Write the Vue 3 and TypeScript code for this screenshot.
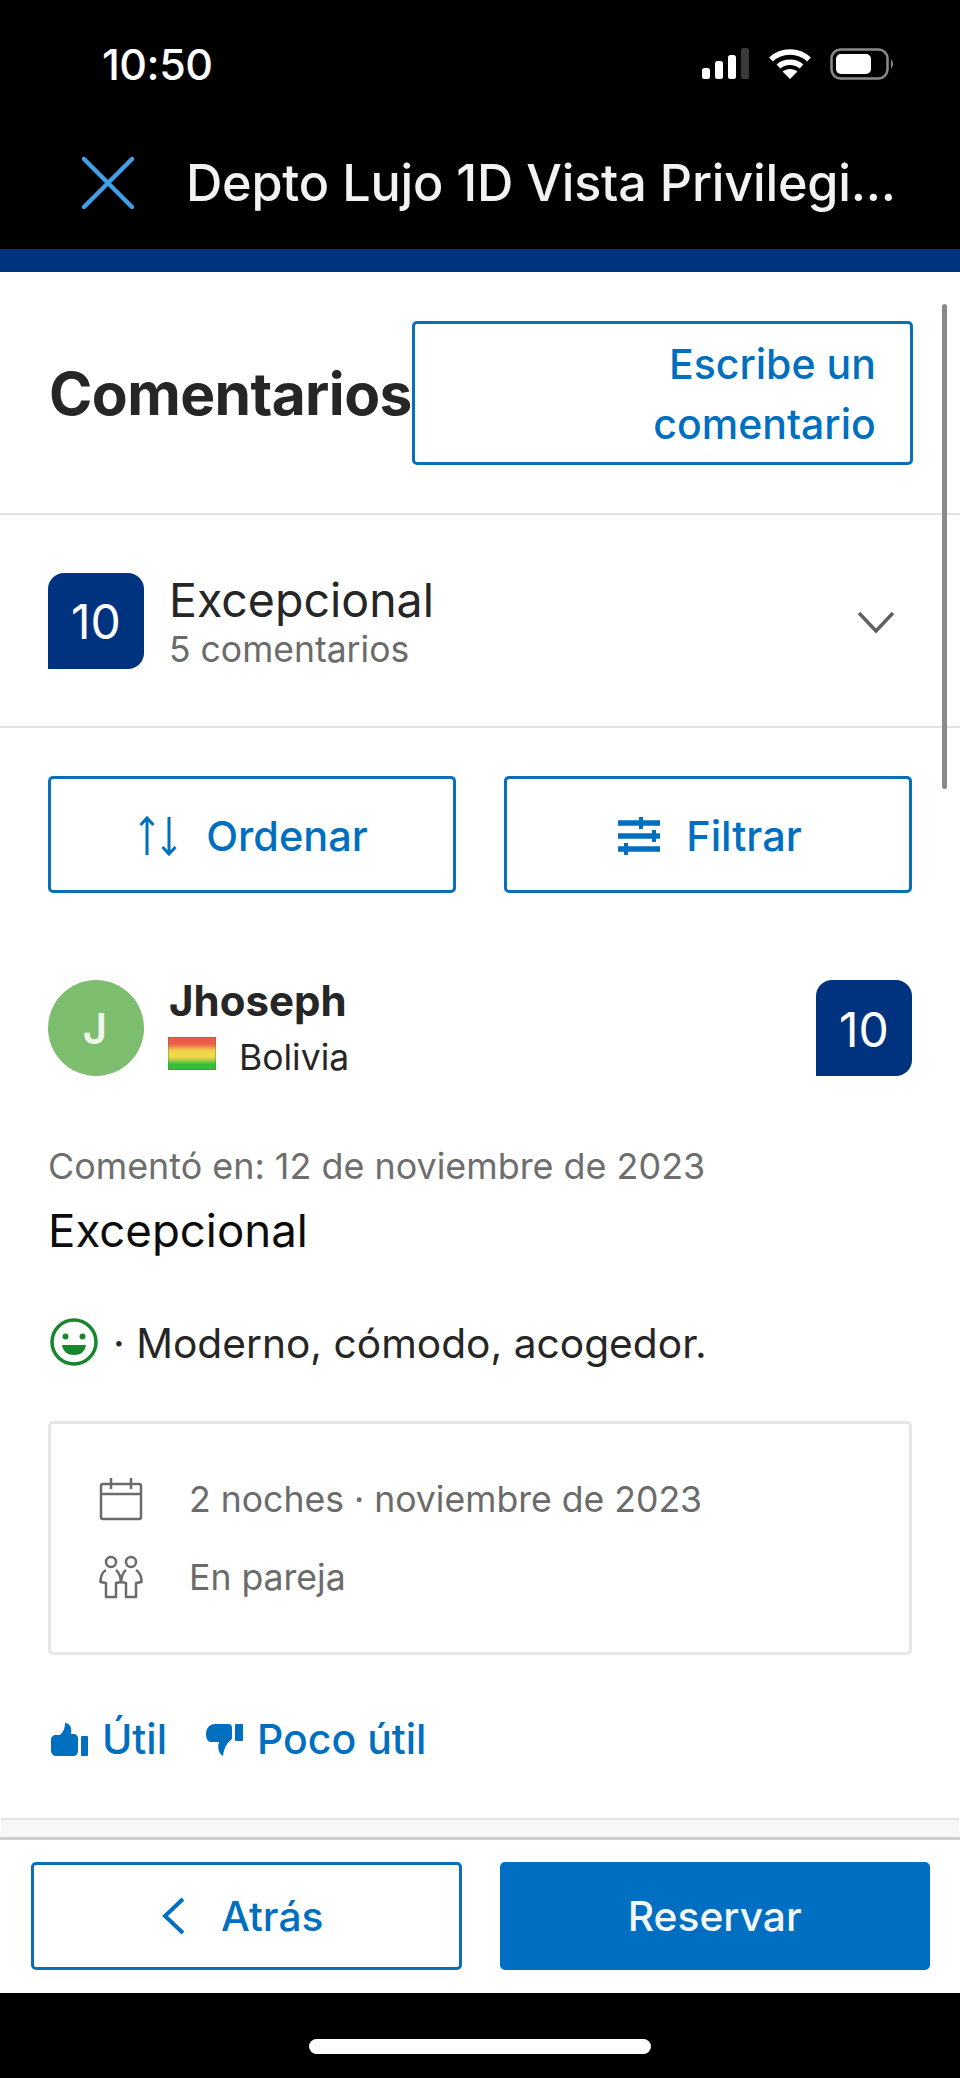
<template>
  <div class="screen">
    <header class="top">
      <div class="status">
        <span class="time">10:50</span>
        <div class="status-icons">
          <svg width="48" height="32" viewBox="0 0 48 32">
            <rect x="0" y="20" width="8" height="11" rx="2.5" fill="#fff" />
            <rect x="13" y="13" width="8" height="18" rx="2.5" fill="#fff" />
            <rect x="26" y="7" width="8" height="24" rx="2.5" fill="#fff" />
            <rect x="39" y="0" width="8" height="31" rx="2.5" fill="#3a3a3a" />
          </svg>
          <svg width="42" height="32" viewBox="0 0 42 32">
            <path d="M2 11.500C12.500 1.500 29.500 1.500 40 11.500" fill="none" stroke="#fff" stroke-width="5.500" />
            <path d="M9.500 18.500C15.500 12.800 26.500 12.800 32.500 18.500" fill="none" stroke="#fff" stroke-width="5.500" />
            <path d="M21 31L13.500 23.500C17.500 20 24.500 20 28.500 23.500Z" fill="#fff" />
          </svg>
          <svg width="64" height="32" viewBox="0 0 64 32">
            <rect x="1.500" y="1.500" width="56" height="29" rx="9" fill="none" stroke="#8a8a8a" stroke-width="2.500" />
            <rect x="6" y="6" width="35" height="20" rx="5" fill="#fff" />
            <path d="M61 11.500C63.500 12.500 63.500 19.500 61 20.500Z" fill="#8a8a8a" />
          </svg>
        </div>
      </div>
      <div class="nav">
        <svg class="nav-close" width="52" height="52" viewBox="0 0 52 52">
          <path d="M2 2L50 50M50 2L2 50" fill="none" stroke="#3f9fe8" stroke-width="4.500" stroke-linecap="round" />
        </svg>
        <span class="nav-title">Depto Lujo 1D Vista Privilegi...</span>
      </div>
    </header>
    <div class="band"></div>

    <main class="content">
      <section class="title-row">
        <h1>Comentarios</h1>
        <button class="outline write-btn">Escribe un comentario</button>
      </section>

      <section class="summary">
        <span class="score">10</span>
        <div class="summary-text">
          <div class="summary-label">Excepcional</div>
          <div class="summary-count">5 comentarios</div>
        </div>
        <svg class="chevron" width="38" height="24" viewBox="0 0 38 24">
          <path d="M2 3L19 21L36 3" fill="none" stroke="#5f5f5f" stroke-width="3.500" />
        </svg>
      </section>

      <section class="actions">
        <button class="outline action sort">
          <svg width="38" height="40" viewBox="0 0 38 40">
            <path d="M8 39V2M1.500 9L8 2L14.500 9M30 1V38M23.500 31L30 38L36.500 31" fill="none" stroke="#006fbf" stroke-width="3" />
          </svg>
          Ordenar
        </button>
        <button class="outline action filter">
          <svg width="44" height="40" viewBox="0 0 44 40">
            <path d="M1 7H43M1 20H43M1 33H43" fill="none" stroke="#006fbf" stroke-width="5.500" />
            <path d="M24 1V13M37 14V26M9 27V39" fill="none" stroke="#006fbf" stroke-width="4" />
          </svg>
          Filtrar
        </button>
      </section>

      <article class="review">
        <div class="reviewer">
          <span class="avatar">J</span>
          <div class="reviewer-info">
            <div class="reviewer-name">Jhoseph</div>
            <div class="reviewer-country"><span class="flag"></span>Bolivia</div>
          </div>
          <span class="score">10</span>
        </div>

        <div class="review-date">Comentó en: 12 de noviembre de 2023</div>
        <div class="review-title">Excepcional</div>
        <div class="review-body">
          <svg width="50" height="48" viewBox="0 0 50 48">
            <circle cx="25" cy="24" r="22" fill="none" stroke="#16872c" stroke-width="3.500" />
            <circle cx="16.500" cy="18.500" r="3" fill="#16872c" />
            <circle cx="33.500" cy="18.500" r="3" fill="#16872c" />
            <path d="M13 27H37C36 34 31 37 25 37C19 37 14 34 13 27Z" fill="#16872c" />
          </svg>
          <span>· Moderno, cómodo, acogedor.</span>
        </div>

        <div class="stay">
          <div class="stay-row">
            <svg width="44" height="44" viewBox="0 0 44 44">
              <path d="M4 7H40A2 2 0 0 1 42 9V40A2 2 0 0 1 40 42H4A2 2 0 0 1 2 40V9A2 2 0 0 1 4 7ZM2 17H42M12 1V12M32 1V12" fill="none" stroke="#6b6b6b" stroke-width="2.500" />
            </svg>
            <span>2 noches · noviembre de 2023</span>
          </div>
          <div class="stay-row">
            <svg width="44" height="44" viewBox="0 0 44 44">
              <g fill="none" stroke="#6b6b6b" stroke-width="2.500" stroke-linejoin="round">
                <circle cx="12" cy="7" r="5" />
                <circle cx="32" cy="7" r="5" />
                <path d="M7 15C3.500 17 1.500 21 1.500 27L7 28V42H17V28L22 27L27 28V42H37V28L42.500 27C42.500 21 40.500 17 37 15" />
                <path d="M17 15C19.500 17 21.500 21 22 27C22.500 21 24.500 17 27 15" />
              </g>
            </svg>
            <span>En pareja</span>
          </div>
        </div>

        <div class="votes">
          <span class="vote">
            <svg width="37" height="33" viewBox="0 0 37 33">
              <path d="M0 17C0 14 2 12 5 12H9C12 9 14 6 14 0C19 0 21 5 20 11H23C25 11 27 13 27 15V28C27 31 25 33 22 33H6C2 33 0 31 0 27Z" fill="#006fbf" />
              <rect x="30" y="13" width="7" height="20" rx="1" fill="#006fbf" />
            </svg>
            Útil
          </span>
          <span class="vote">
            <svg width="37" height="33" viewBox="0 0 37 33">
              <path d="M0 11C0 5 4 1 9 1H23C25 1 26 3 26 5V16C22 19 18 24 17 33C13 31 11 25 13 19H5C2 19 0 16 0 11Z" fill="#006fbf" />
              <rect x="29" y="1" width="8" height="17" rx="1" fill="#006fbf" />
            </svg>
            Poco útil
          </span>
        </div>
      </article>
      <div class="scrollbar"></div>
    </main>

    <footer class="footer">
      <button class="outline foot-btn back">
        <svg width="24" height="38" viewBox="0 0 24 38">
          <path d="M22 2L4 19L22 36" fill="none" stroke="#006fbf" stroke-width="4" />
        </svg>
        Atrás
      </button>
      <button class="foot-btn primary">Reservar</button>
    </footer>
    <div class="home"><span class="home-bar"></span></div>
  </div>
</template>

<script setup lang="ts">
</script>

<style>
html, body { margin: 0; background: #000; }
</style>

<style scoped>
.screen {
  width: 960px; height: 2078px; display: flex; flex-direction: column; position: relative;
  background: #fff; font-family: Inter, "Liberation Sans", sans-serif; color: #262626; overflow: hidden;
}
button { font-family: inherit; cursor: pointer; }
svg { flex-shrink: 0; display: block; }

.top { background: #000; color: #fff; height: 249px; flex-shrink: 0; }
.status { display: flex; justify-content: space-between; align-items: center; padding: 44px 66px 0 102px; height: 40px; }
.time { font-size: 43px; font-weight: 500; letter-spacing: -0.5px; }
.status-icons { display: flex; gap: 19px; align-items: center; }
.nav { display: flex; align-items: center; gap: 52px; padding: 68px 66px 0 82px; }
.nav-title { font-size: 50.300px; font-weight: 500; color: #f2f2f2; white-space: nowrap; letter-spacing: -0.2px; }
.band { height: 23px; background: #00337f; flex-shrink: 0; }

.content { flex: 1; position: relative; overflow: hidden; min-height: 0; }
.outline { background: #fff; border: 3px solid #0b6fb8; border-radius: 5px; color: #006fbf; }

.title-row {
  display: flex; align-items: center; padding: 49px 48px 48px 49px;
  border-bottom: 2px solid #e2e2e2;
}
.title-row h1 { flex: 1; margin: 0; font-size: 58.700px; font-weight: 700; letter-spacing: -0.6px; white-space: nowrap; }
.write-btn {
  width: 501px; flex-shrink: 0; height: 144px; text-align: right; padding: 2px 34px 0 100px;
  font-size: 41px; line-height: 60px; font-weight: 500;
}

.summary {
  display: flex; align-items: center; gap: 25px; height: 211px; padding: 0 65px 0 48px;
  border-bottom: 2px solid #e2e2e2;
}
.chevron { margin-top: 3px; }
.score {
  width: 96px; height: 96px; flex-shrink: 0; display: flex; align-items: center; justify-content: center;
  box-sizing: border-box; padding-top: 2px;
  background: #00337f; color: #fff; font-size: 48px; border-radius: 16px 16px 16px 0;
}
.summary-text { flex: 1; }
.summary-label { font-size: 46.500px; line-height: 54px; margin-top: 2px; }
.summary-count { font-size: 35.500px; line-height: 42px; margin-top: 2px; color: #6b6b6b; }

.actions { display: flex; gap: 48px; padding: 48px 48px 0; }
.action {
  flex: 1; height: 117px; display: flex; align-items: center; justify-content: center; gap: 29px;
  font-size: 41.500px; font-weight: 500; padding: 2px 0 0;
}
.sort svg { margin-left: 3px; }
.filter { gap: 25px; }
.filter svg { margin-left: 3px; }

.review { padding: 87px 48px 0; }
.reviewer { display: flex; align-items: center; gap: 25px; }
.avatar {
  width: 96px; height: 96px; border-radius: 50%; flex-shrink: 0; background: #7dbd6e; color: #eef7ea;
  display: flex; align-items: center; justify-content: center; font-size: 42px; font-weight: 600; padding-right: 2px; box-sizing: border-box;
}
.reviewer-info { flex: 1; }
.reviewer-name { font-size: 42px; font-weight: 700; line-height: 46px; margin-top: -2px; }
.reviewer-country { display: flex; align-items: center; gap: 23px; font-size: 35.500px; line-height: 36px; margin-top: 16px; }
.flag {
  width: 48px; height: 33px; margin-top: -10px; margin-left: -1px;
  background: linear-gradient(#ec5a4c 0 18%, #f0d64a 42% 62%, #35bd3a 85%);
  border: 1px solid rgba(60, 120, 40, 0.35); box-sizing: border-box;
}

.review-date { margin-top: 68px; font-size: 35.900px; line-height: 44px; color: #6e6e6e; }
.review-title { margin-top: 14px; font-size: 45.600px; line-height: 58px; color: #0c0c0c; }
.review-body { display: flex; align-items: center; gap: 14px; margin-top: 59px; font-size: 40.700px; line-height: 50px; }
.review-body svg { margin-left: 1px; margin-top: -4px; }

.stay {
  margin-top: 52px; height: 234px; box-sizing: border-box; border: 3px solid #e6e6e6; border-radius: 5px;
  padding: 53px 48px 0; display: flex; flex-direction: column; gap: 34px; color: #6b6b6b; font-size: 35.600px;
}
.stay-row { display: flex; align-items: center; gap: 46px; height: 44px; }

.votes { display: flex; gap: 39px; margin-top: 59px; color: #006fbf; font-size: 41px; font-weight: 500; padding-left: 3px; }
.vote { display: flex; align-items: center; gap: 14px; }

.scrollbar {
  position: absolute; top: 32px; left: 942px; width: 5px; height: 485px; border-radius: 3px; background: #8a8a8a;
}

.footer {
  flex-shrink: 0; height: 156px; box-sizing: border-box; display: flex; gap: 38px; padding: 22px 30px 23px 31px;
  border-top: 3px solid #cfcfcf; box-shadow: 0 -18px 0 -1px #f7f7f7, 0 -20px 0 -1px #e4e4e4;
  position: relative;
}
.foot-btn {
  flex: 1; height: 108px; padding: 0; display: flex; align-items: center; justify-content: center; gap: 36px;
  font-size: 40.700px; font-weight: 500; border-radius: 5px;
}
.back svg { margin-left: -8px; }
.primary { background: #006fc1; color: #f3f8fc; border: 3px solid #006fc1; }

.home { height: 85px; flex-shrink: 0; background: #000; display: flex; justify-content: center; padding-top: 46px; box-sizing: border-box; }
.home-bar { width: 342px; height: 15px; border-radius: 8px; background: #fff; }
</style>
